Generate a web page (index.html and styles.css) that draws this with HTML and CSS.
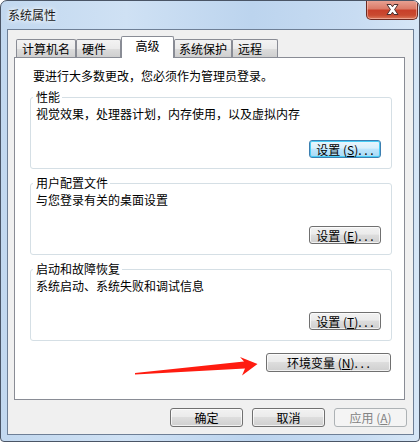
FILE: index.html
```html
<!DOCTYPE html>
<html lang="zh-CN">
<head>
<meta charset="utf-8">
<title>系统属性</title>
<link rel="stylesheet" href="styles.css">
</head>
<body>
<div class="window">
  <div class="titlebar">
    <span class="title">系统属性</span>
    <div class="close">
      <svg width="51" height="19" viewBox="0 0 51 19">
        <path d="M20 4.5 L24 4.5 L25.5 6.8 L27 4.5 L31 4.5 L27.6 9.5 L31 14.5 L27 14.5 L25.5 12.2 L24 14.5 L20 14.5 L23.4 9.5 Z" fill="#ffffff" stroke="#4a3030" stroke-width="1" stroke-linejoin="round"/>
      </svg>
    </div>
  </div>
  <div class="client">
    <div class="tabs">
      <div class="tab t1">计算机名</div>
      <div class="tab t2">硬件</div>
      <div class="tab t3 active">高级</div>
      <div class="tab t4">系统保护</div>
      <div class="tab t5">远程</div>
    </div>
    <div class="panel">
      <p class="intro">要进行大多数更改，您必须作为管理员登录。</p>
      <div class="group">
        <div class="group-title">性能</div>
        <div class="group-text">视觉效果，处理器计划，内存使用，以及虚拟内存</div>
        <div class="group-actions"><button class="btn focus">设置 (<u>S</u>). . .</button></div>
      </div>
      <div class="group">
        <div class="group-title">用户配置文件</div>
        <div class="group-text">与您登录有关的桌面设置</div>
        <div class="group-actions"><button class="btn">设置 (<u>E</u>). . .</button></div>
      </div>
      <div class="group last">
        <div class="group-title">启动和故障恢复</div>
        <div class="group-text">系统启动、系统失败和调试信息</div>
        <div class="group-actions"><button class="btn">设置 (<u>T</u>). . .</button></div>
      </div>
      <div class="env-row"><button class="btn env">环境变量 (<u>N</u>). . .</button></div>
    </div>
    <div class="footer">
      <button class="btn fbtn">确定</button>
      <button class="btn fbtn">取消</button>
      <button class="btn fbtn disabled">应用 (<u>A</u>)</button>
    </div>
  </div>
  <svg class="arrow" width="126" height="22" viewBox="0 0 126 22">
    <path d="M2 18 L111 6.5 L107 2 L124.5 9 L109 20.5 L112 13.5 L2 19.5 Z" fill="#ff1c10"/>
  </svg>
</div>
</body>
</html>
```

FILE: styles.css
```css
* { box-sizing: border-box; }
html, body { margin: 0; padding: 0; background: #ffffff; }
body {
  font-family: "Noto Sans CJK SC", "Noto Sans", sans-serif;
  font-size: 12px;
  line-height: 14px;
  color: #000;
}
.window {
  position: relative;
  width: 420px;
  height: 442px;
  border: 1px solid #4a5566;
  border-radius: 7px 7px 4px 4px;
  background: linear-gradient(90deg, #c2d8ef 0%, #cfe1f4 30%, #bcd4ee 60%, #c8dcf2 85%, #d6e6f6 100%);
  overflow: hidden;
}
.titlebar {
  height: 28px;
  display: flex;
  justify-content: space-between;
  align-items: flex-start;
}
.title {
  margin: 7px 0 0 7px;
  line-height: 14px;
  color: #1a1a1a;
  text-shadow: 0 0 4px #ffffff, 0 0 6px #ffffff;
}
.close {
  width: 52px;
  height: 20px;
  margin: -1px 1px 0 0;
  border: 1px solid #6b2a22;
  border-top: none;
  border-radius: 0 0 5px 5px;
  background: linear-gradient(180deg, #e9a597 0%, #dc7c69 45%, #c8402a 55%, #c94a30 80%, #dc7a5c 100%);
  box-shadow: inset 0 0 0 1px rgba(255,210,200,0.5);
}
.close svg { display: block; }
.client {
  width: 407px;
  height: 406px;
  margin-left: 6px;
  border: 1px solid #6e7f96;
  background: #f0f0f0;
}
.tabs {
  display: flex;
  align-items: flex-end;
  height: 21px;
  margin-top: 6px;
  padding-left: 8px;
  position: relative;
  z-index: 1;
}
.tab {
  height: 18px;
  border: 1px solid #898c95;
  border-bottom: none;
  border-radius: 2px 2px 0 0;
  background: linear-gradient(180deg, #f3f3f3 0%, #ebebeb 50%, #dddddd 51%, #cfcfcf 100%);
  text-align: center;
  line-height: 17px;
  color: #000;
}
.t1 { width: 60px; }
.t2 { width: 45px; text-align: left; padding-left: 5px; }
.t3 { width: 53px; }
.t4 { width: 58px; }
.t5 { width: 46px; text-align: left; padding-left: 5px; }
.tab.active {
  height: 22px;
  margin-bottom: -1px;
  background: #ffffff;
  line-height: 18px;
}
.panel {
  width: 391px;
  margin-left: 6px;
  border: 1px solid #898c95;
  background: #ffffff;
  padding: 11px 12px 27px 15px;
}
.intro {
  margin: 0 0 14px 3px;
  line-height: 14px;
}
.group {
  border: 1px solid #d5dfe5;
  border-radius: 3px;
  padding: 0 10px 10px 5px;
  margin-bottom: 14px;
}
.group.last { margin-bottom: 12px; }
.group-title {
  display: table;
  margin: -8px 0 0 -3px;
  padding: 0 2px 0 3px;
  background: #ffffff;
  line-height: 14px;
}
.group-text {
  margin-top: 3px;
  line-height: 14px;
}
.group-actions {
  display: flex;
  justify-content: flex-end;
  margin-top: 19px;
}
.btn {
  font-family: "Noto Sans CJK SC", "Noto Sans", sans-serif;
  font-size: 12px;
  line-height: 15px;
  height: 18px;
  padding: 0;
  border: 1px solid #707070;
  border-radius: 3px;
  color: #000;
  background: linear-gradient(180deg, #f2f2f2 0%, #ebebeb 45%, #dddddd 50%, #cfcfcf 100%);
  box-shadow: inset 0 0 0 1px rgba(255,255,255,0.7);
  text-align: center;
  white-space: nowrap;
}
.btn u { text-underline-offset: 1px; }
.group .btn { width: 72px; }
.btn.focus {
  border-color: #3c7fb1;
  background: linear-gradient(180deg, #eaf6fd 0%, #d9f0fc 45%, #bee6fd 50%, #a7d9f5 100%);
  box-shadow: inset 0 0 0 1px #48cdf6;
}
.env-row {
  display: flex;
  justify-content: flex-end;
  padding-right: 1px;
}
.btn.env { width: 125px; height: 19px; }
.footer {
  display: flex;
  justify-content: flex-end;
  gap: 9px;
  margin-top: 8px;
  padding-right: 6px;
}
.btn.fbtn { width: 73px; height: 19px; }
.btn.disabled {
  border-color: #adb2b5;
  background: #f4f4f4;
  color: #838383;
  box-shadow: none;
}
.arrow {
  position: absolute;
  left: 132px;
  top: 354px;
}
```
